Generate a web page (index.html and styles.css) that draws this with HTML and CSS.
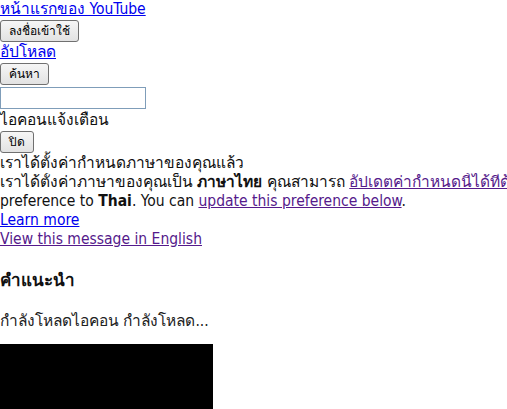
FILE: index.html
```html
<!DOCTYPE html>
<html lang="th">

<head>
    <title>YouTube</title>
    <meta charset="UTF-8" />
    <link rel="stylesheet" href="styles.css">
</head>

<body>
    <div class="masthead">
        <a href="#" class="home-link">หน้าแรกของ YouTube</a>
        <div><button class="btn">ลงชื่อเข้าใช้</button></div>
        <a href="#" class="upload-link">อัปโหลด</a>
        <div><button class="btn">ค้นหา</button></div>
        <input type="text" class="search-box">
        <div>ไอคอนแจ้งเตือน</div>
    </div>
    <div class="notice">
        <div><button class="btn">ปิด</button></div>
        <div>เราได้ตั้งค่ากำหนดภาษาของคุณแล้ว</div>
        <div class="clip">เราได้ตั้งค่าภาษาของคุณเป็น <b>ภาษาไทย</b> คุณสามารถ <a href="#" class="visited">อัปเดตค่ากำหนดนี้ได้ที่ด้านล่าง</a> We've set your language</div>
        <div>preference to <b>Thai</b>. You can <a href="#" class="visited">update this preference below</a>.</div>
        <div><a href="#">Learn more</a></div>
        <div><a href="#" class="visited">View this message in English</a></div>
    </div>
    <h3 class="section-title">คำแนะนำ</h3>
    <p class="loading">กำลังโหลดไอคอน กำลังโหลด...</p>
    <div class="player"></div>
</body>

</html>
```

FILE: styles.css
```css
body {
    margin: 0;
    font: 15.5px/19px "DejaVu Sans Condensed", "DejaVu Sans", sans-serif;
    font-stretch: condensed;
    color: #111;
}

a {
    color: #0000ee;
}

a.visited {
    color: #551a8b;
}

.masthead a {
    display: inline-block;
}

.btn {
    font: 12px/14px "DejaVu Sans", sans-serif;
    color: #000;
    padding: 3px 8px;
    margin: 1px 0;
    border: 1px solid #707070;
    border-radius: 3px;
    background: linear-gradient(#f6f6f6, #e2e2e2);
}

.search-box {
    display: block;
    width: 146px;
    height: 22px;
    margin: 1px 0 2px;
    box-sizing: border-box;
    border: 1px solid #7f9db9;
    padding: 0 2px;
}

.clip {
    white-space: nowrap;
    overflow: hidden;
}

.section-title {
    font-size: 17px;
    font-weight: bold;
    margin: 22px 0;
}

.loading {
    color: #222;
    margin: 0 0 13px;
}

.player {
    width: 213px;
    height: 80px;
    background: #000;
}
```
